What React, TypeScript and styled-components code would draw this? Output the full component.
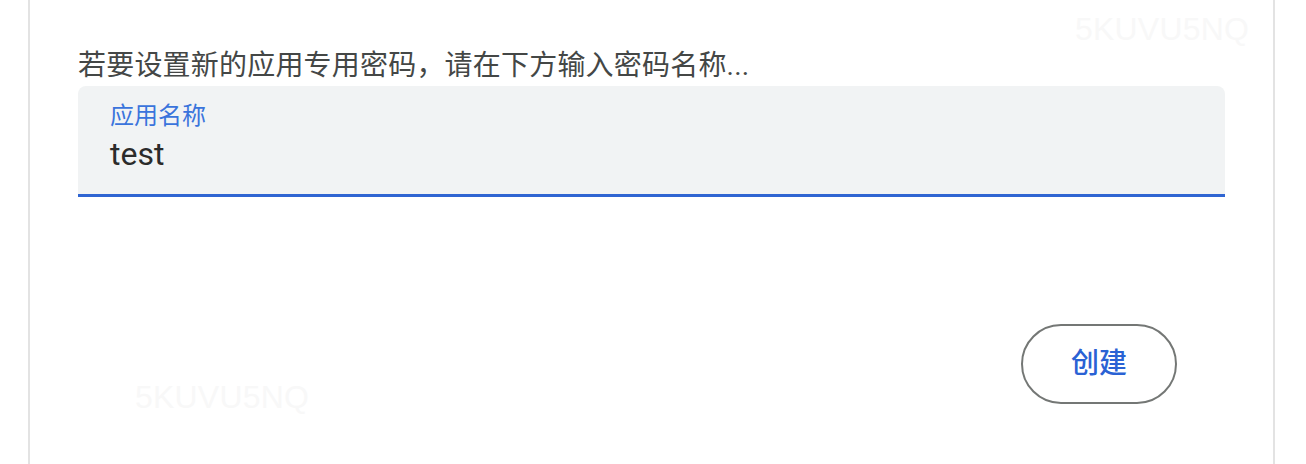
import React from "react";
import styled, { createGlobalStyle } from "styled-components";

const GlobalStyle = createGlobalStyle`
  html, body {
    margin: 0;
    padding: 0;
    background: #ffffff;
  }
  body {
    font-family: Roboto, "Noto Sans CJK SC", "Noto Sans", sans-serif;
    -webkit-font-smoothing: antialiased;
  }
`;

const Page = styled.div`
  display: flex;
  height: 464px;
  overflow: hidden;
  padding-left: 28px;
  box-sizing: border-box;
`;

const Card = styled.section`
  position: relative;
  width: 1247px;
  height: 464px;
  box-sizing: border-box;
  border-left: 2px solid #e3e3e3;
  border-right: 2px solid #e3e3e3;
  padding: 46px 48px 0;
  display: flex;
  flex-direction: column;
  overflow: hidden;
`;

const Watermark = styled.div<{ $top: number; $left: number }>`
  position: absolute;
  top: ${(p) => p.$top}px;
  left: ${(p) => p.$left}px;
  font-family: "Liberation Sans", Arial, sans-serif;
  font-size: 32px;
  line-height: 40px;
  color: #f8f8f8;
  pointer-events: none;
  user-select: none;
  letter-spacing: 0.2px;
`;

const Intro = styled.p`
  margin: 0;
  font-family: Roboto, "Noto Sans CJK SC", sans-serif;
  font-size: 28px;
  line-height: 40px;
  letter-spacing: 0.2px;
  color: #444746;
`;

const Field = styled.div`
  height: 111px;
  box-sizing: border-box;
  background: #f1f3f4;
  border-radius: 8px 8px 0 0;
  border-bottom: 3px solid #2f65d2;
  padding: 14px 32px 0;
  display: flex;
  flex-direction: column;
`;

const FieldLabel = styled.label`
  font-family: Roboto, "Noto Sans CJK SC", sans-serif;
  font-size: 24px;
  line-height: 32px;
  color: #3a74dc;
`;

const FieldValue = styled.div`
  margin-top: 2px;
  font-family: Roboto, "Noto Sans CJK SC", sans-serif;
  font-size: 32px;
  line-height: 40px;
  color: #2b2b2b;
`;

const Footer = styled.div`
  margin-top: 127px;
  display: flex;
  justify-content: flex-end;
  padding-right: 48px;
`;

const OutlineButton = styled.button`
  width: 156px;
  height: 80px;
  box-sizing: border-box;
  border: 2px solid #747775;
  border-radius: 40px;
  background: #ffffff;
  color: #2a62d4;
  font-family: Roboto, "Noto Sans CJK SC", sans-serif;
  font-size: 28px;
  font-weight: 500;
  line-height: 40px;
  padding: 0;
  cursor: pointer;
`;

export default function App() {
  return (
    <>
      <GlobalStyle />
      <Page>
        <Card>
          <Watermark $top={9} $left={1045}>5KUVU5NQ</Watermark>
          <Watermark $top={377} $left={105}>5KUVU5NQ</Watermark>
          <Intro>若要设置新的应用专用密码，请在下方输入密码名称...</Intro>
          <Field>
            <FieldLabel>应用名称</FieldLabel>
            <FieldValue>test</FieldValue>
          </Field>
          <Footer>
            <OutlineButton>创建</OutlineButton>
          </Footer>
        </Card>
      </Page>
    </>
  );
}
